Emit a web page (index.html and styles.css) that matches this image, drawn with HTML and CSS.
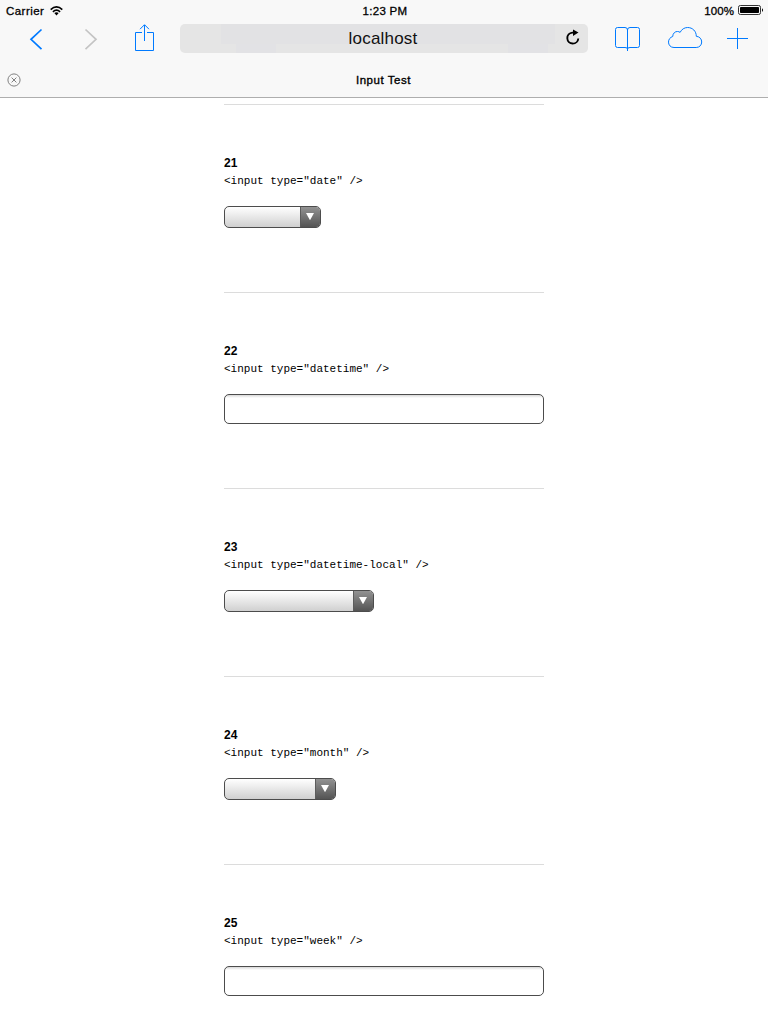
FILE: index.html
```html
<!DOCTYPE html>
<html lang="en">
<head>
<meta charset="utf-8">
<title>Input Test</title>
<link rel="stylesheet" href="styles.css">
</head>
<body>
<header class="chrome">
  <div class="status">
    <div class="status-left"><span class="carrier">Carrier</span>
      <svg class="wifi" width="13" height="10" viewBox="0 0 13 10"><g fill="none" stroke="#000" stroke-width="1.7"><path d="M.7 3.6Q6.5-1.7 12.3 3.6"/><path d="M2.9 5.8Q6.5 2.6 10.1 5.8"/></g><path d="M4.3 7.1Q6.5 5.3 8.7 7.1L6.5 9.5z"/></svg>
    </div>
    <span class="time">1:23 PM</span>
    <div class="status-right"><span class="percent">100%</span>
      <svg class="battery" width="26" height="10" viewBox="0 0 26 10"><rect x=".5" y=".5" width="22" height="9" rx="1.8" fill="none" stroke="#333"/><rect x="2" y="2" width="19" height="6" rx=".8"/><path d="M24 3.2q1 .4 1 1.8t-1 1.8z"/></svg>
    </div>
  </div>
  <div class="toolbar">
    <svg class="back" width="18" height="30" viewBox="0 0 18 30"><path d="M13.500 5.500L3 15.300l10.500 9.800" fill="none" stroke="#007aff" stroke-width="1.700"/></svg>
    <svg class="forward" width="18" height="30" viewBox="0 0 18 30"><path d="M3.500 5.500L14 15.300 3.500 25.100" fill="none" stroke="#c4c4c4" stroke-width="1.700"/></svg>
    <svg class="share" width="26" height="30" viewBox="0 0 26 30"><path d="M10 8.500H3.500v18h18v-18H15M12.500 17V1M8 5.200L12.500.700 17 5.200" fill="none" stroke="#007aff"/></svg>
    <div class="address"><span class="host">localhost</span>
      <svg class="reload" width="16" height="18" viewBox="0 0 16 18"><path d="M9.500 3.600H7.300A5.500 5.500 0 1 0 13.300 9.500" fill="none" stroke="#000" stroke-width="1.900"/><path d="M8 .5L13.500 3.600 8 7z"/></svg>
    </div>
    <svg class="book" width="30" height="30" viewBox="0 0 30 30"><path d="M15.500 27V6q0-2.500-2.500-2.500H5.500q-2 0-2 2v16q0 2 2 2H13q2.500 0 2.500 1.500 0-1.500 2.500-1.500h7.500q2 0 2-2v-16q0-2-2-2H18Q15.500 3.500 15.500 6" fill="none" stroke="#007aff"/></svg>
    <svg class="cloud" width="38" height="30" viewBox="0 0 38 30"><path d="M8 23.500C4.500 23.500 2.500 21 2.500 18.100c0-2.700 1.700-4.800 4.200-5.600C6.800 9.300 9.200 7.300 11.500 7.500c1 0 1.900.300 2.600.900C15.600 5.300 18.400 3.500 21.600 3.500c5 0 8.700 3.700 8.700 8.800 3.500.300 5.400 2.800 5.400 5.700 0 3-2.200 5.500-5.500 5.500z" fill="none" stroke="#007aff"/></svg>
    <svg class="plus" width="24" height="30" viewBox="0 0 24 30"><path d="M11.500 4v21M1 14.500h21" fill="none" stroke="#007aff"/></svg>
  </div>
  <div class="tab">
    <svg class="close" width="14" height="14" viewBox="0 0 14 14"><circle cx="7" cy="7" r="6.100" fill="none" stroke="#808080"/><path d="M4.600 4.600l4.800 4.800M9.400 4.600L4.600 9.400" stroke="#808080"/></svg>
    <span class="tab-title">Input Test</span>
  </div>
</header>
<main class="page">
  <section class="item">
    <h2 class="number">21</h2>
    <code class="code">&lt;input type="date" /&gt;</code>
    <div class="select date"><span class="arrow"><svg class="triangle" width="10" height="9" viewBox="0 0 10 9"><path d="M1 1h8L5 8.200z"/></svg></span></div>
  </section>
  <section class="item">
    <h2 class="number">22</h2>
    <code class="code">&lt;input type="datetime" /&gt;</code>
    <div class="field"></div>
  </section>
  <section class="item">
    <h2 class="number">23</h2>
    <code class="code">&lt;input type="datetime-local" /&gt;</code>
    <div class="select datetime-local"><span class="arrow"><svg class="triangle" width="10" height="9" viewBox="0 0 10 9"><path d="M1 1h8L5 8.200z"/></svg></span></div>
  </section>
  <section class="item">
    <h2 class="number">24</h2>
    <code class="code">&lt;input type="month" /&gt;</code>
    <div class="select month"><span class="arrow"><svg class="triangle" width="10" height="9" viewBox="0 0 10 9"><path d="M1 1h8L5 8.200z"/></svg></span></div>
  </section>
  <section class="item last">
    <h2 class="number">25</h2>
    <code class="code">&lt;input type="week" /&gt;</code>
    <div class="field"></div>
  </section>
</main>
</body>
</html>
```

FILE: styles.css
```css
* { box-sizing: border-box; }
html, body { height: 100%; }
body { margin: 0; background: #fff; color: #000; font-family: "Liberation Sans", Arial, sans-serif; overflow: hidden; }
svg { display: block; flex: none; }

.chrome { height: 98px; background: #f8f8f8; border-bottom: 1px solid #aeaeae; }
.status { display: grid; grid-template-columns: 1fr auto 1fr; height: 24px; padding: 4px 4px 0 6px; font-size: 11.5px; line-height: 14px; -webkit-text-stroke: .3px #000; }
.status-left, .status-right { display: flex; align-items: flex-start; }
.status-right { justify-content: flex-end; }
.carrier { letter-spacing: .45px; }
.time { letter-spacing: .3px; }
.percent { letter-spacing: .1px; }
.wifi { margin: 2px 0 0 6px; }
.battery { margin: 1px 0 0 4px; }

.toolbar { display: flex; height: 30px; padding-left: 28px; }
.forward { margin-left: 36px; }
.share { margin-left: 32px; }
.address { display: flex; align-items: center; width: 408px; height: 29px; margin-left: 22px; padding-right: 7px; border-radius: 5px;
  background: linear-gradient(#e2e2e4, #e2e2e4) 41px 0 / 334px 20px no-repeat, linear-gradient(#e2e2e5, #e2e2e5) 56px 20px / 40px 9px no-repeat, linear-gradient(#e2e2e5, #e2e2e5) 328px 20px / 40px 9px no-repeat, #e5e5e5; }
.host { flex: 1; padding-left: 21px; text-align: center; font-size: 17px; line-height: 28px; letter-spacing: .2px; color: #111; }
.reload { margin-top: -1px; }
.book { margin-left: 24px; }
.cloud { margin-left: 24px; }
.plus { margin-left: 22px; }

.tab { display: flex; align-items: center; height: 43px; padding: 9px 22px 0 7px; }
.tab-title { flex: 1; text-align: center; font-size: 11.5px; line-height: 14px; letter-spacing: .55px; -webkit-text-stroke: .35px #000; }

.page { width: 320px; margin: 6px auto 0; }
.item { border-top: 1px solid #dcdcdc; padding: 49px 0 64px; }
.last { padding-bottom: 28px; }
.number { margin: 0; font-size: 12px; line-height: 18px; font-weight: bold; }
.code { display: block; margin-bottom: 16px; font-family: "Liberation Mono", "Courier New", monospace; font-size: 11px; line-height: 18px; }
.field { height: 30px; border: 1px solid #4c4c4c; border-radius: 5px; background: linear-gradient(#d8d8d8, #fff 3px); }
.select { display: flex; justify-content: flex-end; height: 22px; border: 1px solid #4c4c4c; border-radius: 5px; background: linear-gradient(#fff, #d0d0d0); overflow: hidden; }
.date { width: 97px; }
.datetime-local { width: 150px; }
.month { width: 112px; }
.arrow { display: flex; align-items: center; justify-content: center; width: 20px; padding: 0 2px 1px 0; border-left: 1px solid #5c5c5c; background: linear-gradient(#929292, #545454); }
.triangle { fill: #fff; }
```
